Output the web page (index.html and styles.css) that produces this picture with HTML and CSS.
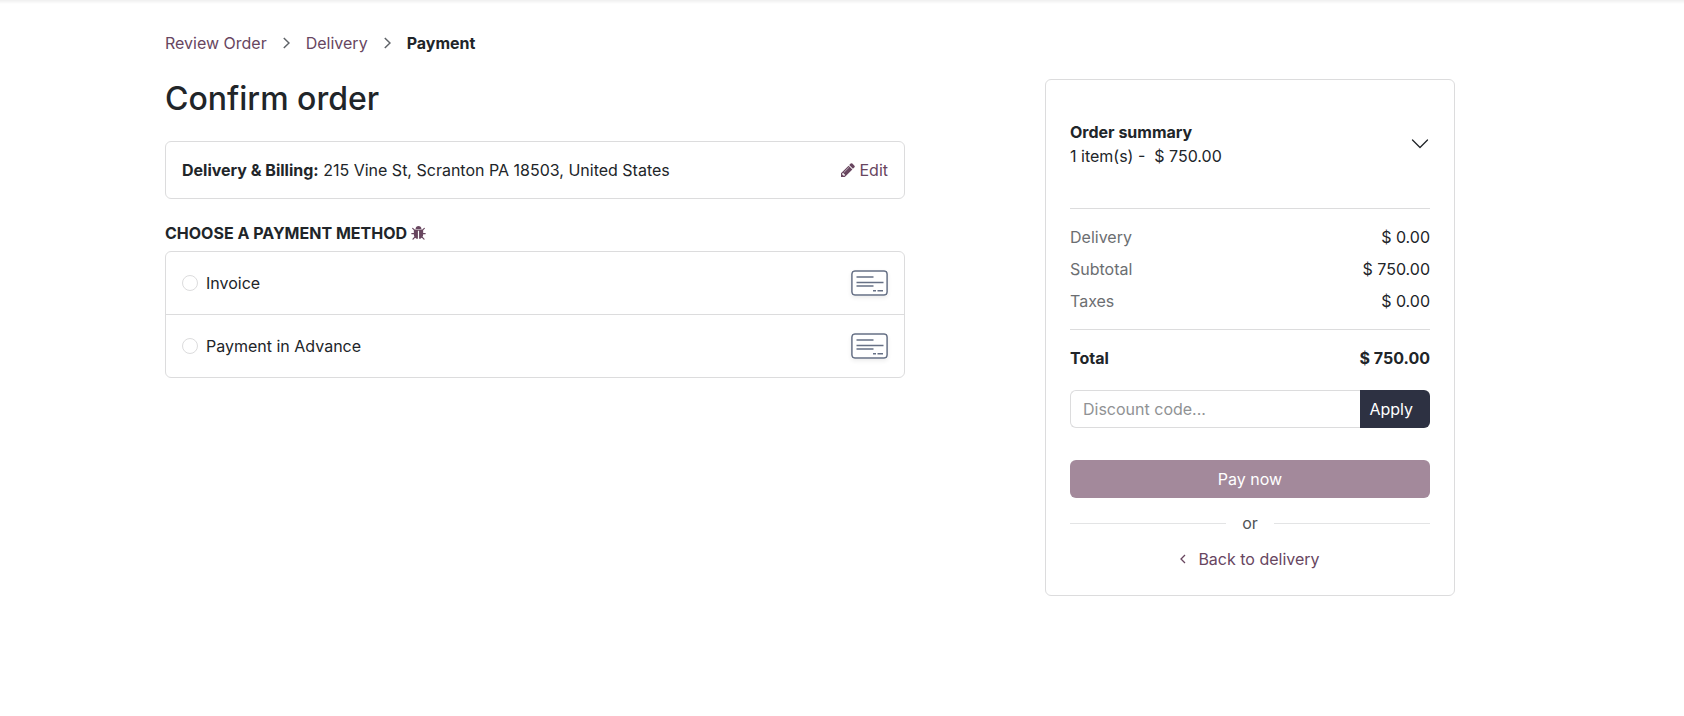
FILE: index.html
```html
<!DOCTYPE html>
<html lang="en">
<head>
<meta charset="utf-8">
<meta name="viewport" content="width=device-width, initial-scale=1">
<title>Confirm order</title>
<link rel="stylesheet" href="styles.css">
</head>
<body>
<main class="page">
  <nav class="breadcrumb" aria-label="Checkout steps">
    <a href="#">Review Order</a>
    <svg class="crumb-sep" viewBox="0 0 7 12" aria-hidden="true"><path d="M.8 1l5.200 5L.8 11"/></svg>
    <a href="#">Delivery</a>
    <svg class="crumb-sep" viewBox="0 0 7 12" aria-hidden="true"><path d="M.8 1l5.200 5L.8 11"/></svg>
    <strong aria-current="step">Payment</strong>
  </nav>

  <div class="columns">
    <section class="checkout">
      <h1 class="title">Confirm order</h1>

      <div class="address">
        <p><strong>Delivery &amp; Billing:</strong> 215 Vine St, Scranton PA 18503, United States</p>
        <a class="edit" href="#">
          <svg class="icon" viewBox="0 0 1536 1536" aria-hidden="true"><path d="M363 1408l91-91-235-235-91 91v107h128v128h107zM886 480q0-22-22-22-10 0-17 7l-542 542q-7 7-7 17 0 22 22 22 10 0 17-7l542-542q7-7 7-17zM832 288l416 416-832 832H0v-416zM1515 384q0 53-37 90l-166 166-416-416 166-165q36-38 90-38 53 0 91 38l235 234q37 39 37 91z"/></svg>
          Edit
        </a>
      </div>

      <h2 class="subtitle">Choose a payment method
        <a class="bug" href="#" aria-label="Debug">
          <svg viewBox="-32 -32 1600 1536" aria-hidden="true"><path d="M1568 800q0 26-19 45t-45 19h-224q0 171-67 290l208 209q19 19 19 45t-19 45q-18 19-45 19t-45-19l-198-197q-5 5-15 13t-42 28.500-65 36.500-82 29-97 13V480H704v896q-51 0-101.500-13.500t-87-33-66-39-43.500-32.500l-15-14-183 207q-20 21-48 21-24 0-43-16-19-18-20.500-44.500T112 1363l202-227q-58-114-58-272H32q-26 0-45-19t-19-45 19-45 45-19h224V442L83 269q-19-19-19-45t19-45 45-19 45 19l173 173h844l173-173q19-19 45-19t45 19 19 45-19 45l-173 173v294h224q26 0 45 19t19 45zM1088 288H448q0-133 93.500-226.500T768-32t226.500 93.500T1088 288z"/></svg>
        </a>
      </h2>

      <form class="methods">
        <label class="method">
          <input type="radio" name="method">
          <span>Invoice</span>
          <svg class="card-icon" viewBox="0 0 37 26" aria-hidden="true"><rect x=".9" y=".9" width="35.200" height="24.200" rx="3"/><path d="M5.500 7H22.500M5.500 12.400H32.500M5.500 16H22.500M22 20.800h3M26.500 20.800h5.500"/></svg>
        </label>
        <label class="method">
          <input type="radio" name="method">
          <span>Payment in Advance</span>
          <svg class="card-icon" viewBox="0 0 37 26" aria-hidden="true"><rect x=".9" y=".9" width="35.200" height="24.200" rx="3"/><path d="M5.500 7H22.500M5.500 12.400H32.500M5.500 16H22.500M22 20.800h3M26.500 20.800h5.500"/></svg>
        </label>
      </form>
    </section>

    <aside class="summary">
      <button class="summary-toggle" type="button" aria-expanded="false">
        <span><strong>Order summary</strong><br>1 item(s) - &nbsp;$ 750.00</span>
        <svg viewBox="0 0 20 20" aria-hidden="true"><path d="M2.500 6l7.500 7.500L17.500 6"/></svg>
      </button>

      <table class="totals">
        <tbody>
          <tr><th scope="row">Delivery</th><td>$ 0.00</td></tr>
          <tr><th scope="row">Subtotal</th><td>$ 750.00</td></tr>
          <tr><th scope="row">Taxes</th><td>$ 0.00</td></tr>
        </tbody>
        <tfoot>
          <tr><th scope="row">Total</th><td>$ 750.00</td></tr>
        </tfoot>
      </table>

      <form class="discount">
        <input type="text" placeholder="Discount code..." aria-label="Discount code">
        <button type="button">Apply</button>
      </form>

      <button class="pay" type="button">Pay now</button>
      <div class="divider">or</div>
      <a class="back" href="#">
        <svg viewBox="0 0 6 10" aria-hidden="true"><path d="M5 1L1 5l4 4"/></svg>
        Back to delivery
      </a>
    </aside>
  </div>
</main>
</body>
</html>
```

FILE: styles.css
```css
* {
  box-sizing: border-box;
}

body {
  margin: 0;
  background: #fff;
  color: #212529;
  font: 16px/24px Inter, "Liberation Sans", sans-serif;
}

h1, h2, p {
  margin: 0;
}

a {
  color: #68465f;
  text-decoration: none;
}

strong {
  font-weight: 700;
}

input, button {
  margin: 0;
  font: inherit;
}

.page {
  padding: 31px 229px 32px 165px;
  background: linear-gradient(#efefef, #fff) 0 0 / 100% 4px no-repeat;
}

.breadcrumb {
  display: flex;
  align-items: center;
  gap: 16px;
}

.crumb-sep {
  width: 7px;
  height: 12px;
  fill: none;
  stroke: #5f6368;
  stroke-width: 1.5;
}

.columns {
  display: grid;
  grid-template-columns: 740fr 410fr;
  column-gap: 140px;
  align-items: start;
  margin-top: 24px;
}

.title {
  font-size: 32px;
  line-height: 40px;
  font-weight: 500;
}

.address {
  display: flex;
  align-items: center;
  justify-content: space-between;
  margin-top: 22px;
  padding: 16px;
  border: 1px solid #dcdcdd;
  border-radius: 6px;
}

.edit {
  display: flex;
  align-items: center;
  gap: 4px;
}

.icon {
  width: 14px;
  height: 14px;
  fill: currentColor;
}

.subtitle {
  display: flex;
  align-items: center;
  gap: 4px;
  margin: 24px 0 8px;
  font-size: 16px;
  line-height: 20px;
  font-weight: 700;
  text-transform: uppercase;
}

.bug {
  display: flex;
}

.bug svg {
  width: 15px;
  height: 14px;
  fill: currentColor;
}

.methods {
  border: 1px solid #dcdcdd;
  border-radius: 6px;
}

.method {
  display: flex;
  align-items: center;
  gap: 8px;
  height: 62px;
  padding: 0 16px;
}

.method + .method {
  height: 63px;
  border-top: 1px solid #dcdcdd;
}

.method input {
  appearance: none;
  width: 16px;
  height: 16px;
  border: 1px solid #dcdcdd;
  border-radius: 50%;
  background: #fff;
}

.method input:checked {
  border: 5px solid #68465f;
}

.card-icon {
  width: 37px;
  height: 26px;
  margin-left: auto;
  border-radius: 4px;
  box-shadow: 0 2px 4px #00000013;
  fill: #fff;
  stroke: #667085;
  stroke-width: 1.5;
}

.summary {
  display: flex;
  flex-direction: column;
  padding: 0 24px 24px;
  border: 1px solid #dcdcdd;
  border-radius: 6px;
}

.summary-toggle {
  display: flex;
  align-items: center;
  justify-content: space-between;
  padding: 40px 0;
  border: 0;
  background: none;
  color: inherit;
  text-align: left;
}

.summary-toggle svg {
  width: 20px;
  height: 20px;
  fill: none;
  stroke: #212529;
  stroke-width: 1.3;
  stroke-linecap: round;
  stroke-linejoin: round;
}

.totals {
  width: 100%;
  border-collapse: separate;
  border-spacing: 0;
}

.totals th,
.totals td {
  padding: 4px 0;
}

.totals th {
  color: #6c6e71;
  font-weight: 400;
  text-align: left;
}

.totals td {
  text-align: right;
}

.totals tbody tr:first-child > *,
.totals tfoot tr > * {
  padding-top: 16px;
  border-top: 1px solid #dcdcdd;
}

.totals tbody tr:last-child > * {
  padding-bottom: 16px;
}

.totals tfoot th,
.totals tfoot td {
  color: #212529;
  font-weight: 700;
}

.discount {
  display: flex;
  margin-top: 16px;
}

.discount input {
  flex: 1;
  min-width: 0;
  height: 38px;
  padding: 0 12px;
  border: 1px solid #dcdcdd;
  border-right: 0;
  border-radius: 6px 0 0 6px;
  color: inherit;
}

.discount input::placeholder {
  color: #909294;
  opacity: 1;
}

.discount button {
  padding: 0 17px 0 9px;
  border: 0;
  border-radius: 0 6px 6px 0;
  background: #2d3142;
  color: #fff;
}

.pay {
  height: 38px;
  margin-top: 32px;
  border: 0;
  border-radius: 6px;
  background: #a3899b;
  color: #fff;
}

.divider {
  display: flex;
  align-items: center;
  gap: 16px;
  margin: 13px 0 12px;
  color: #505356;
}

.divider::before,
.divider::after {
  content: "";
  flex: 1;
  height: 1px;
  background: #e3e4e5;
}

.back {
  display: flex;
  align-items: center;
  justify-content: center;
  gap: 12px;
}

.back svg {
  width: 6px;
  height: 10px;
  fill: none;
  stroke: currentColor;
  stroke-width: 1.3;
}
```
